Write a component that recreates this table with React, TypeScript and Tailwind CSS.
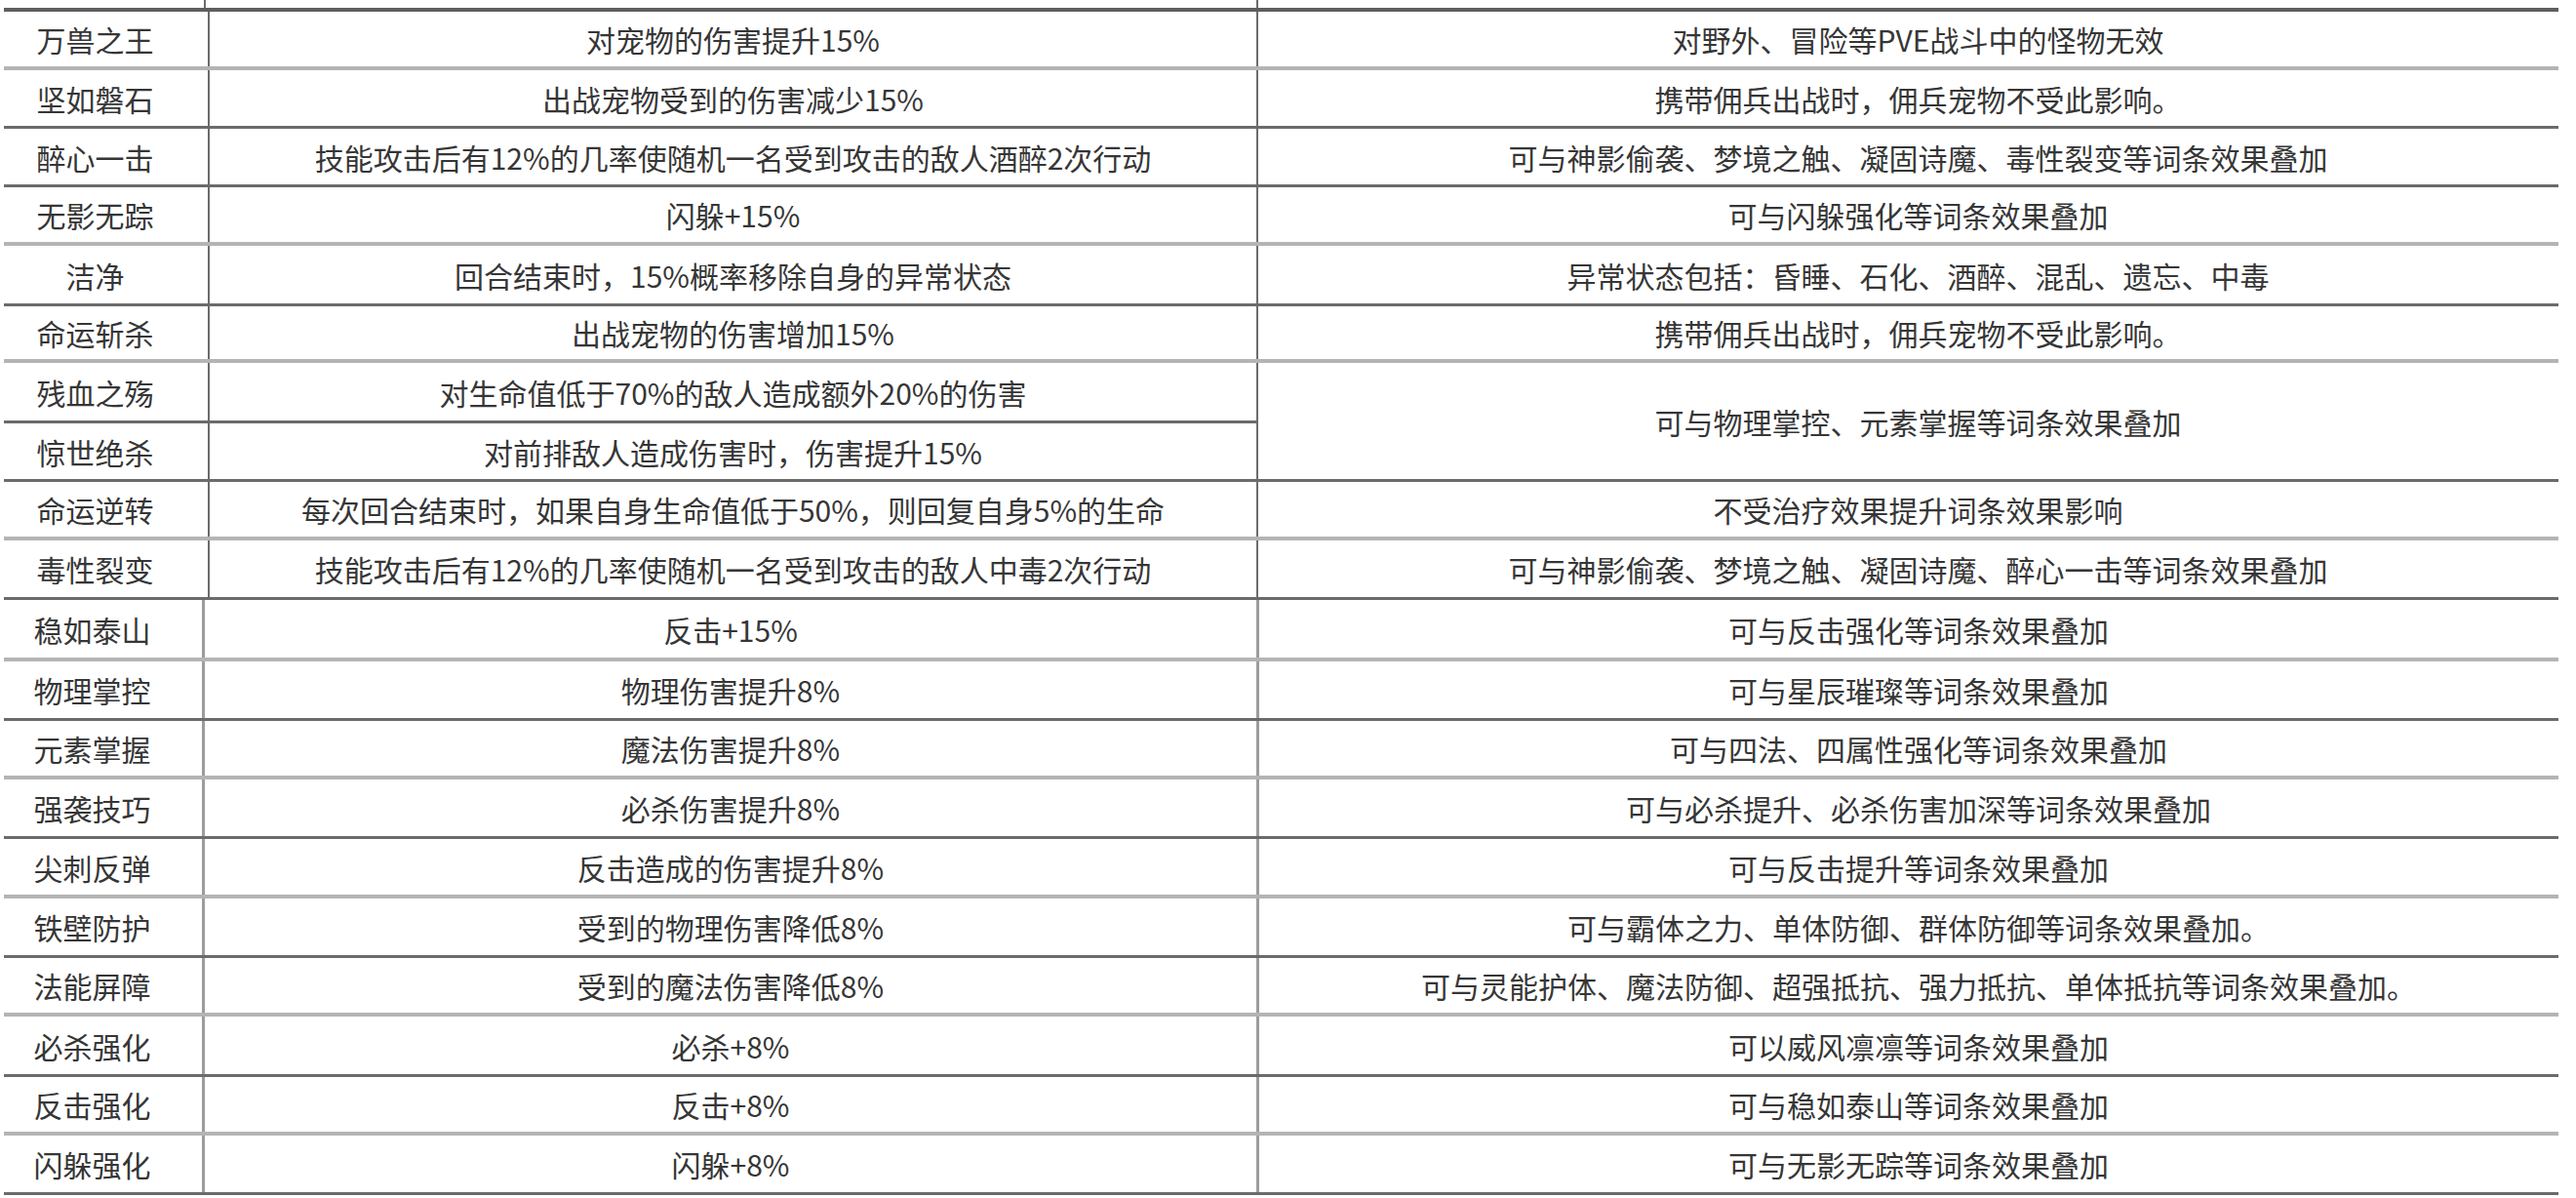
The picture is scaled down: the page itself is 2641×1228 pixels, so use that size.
type Line = 'dark' | 'light';

interface Row {
  name: string;
  effect: string;
  note: string;
  h: string;
  line: Line;
}

const LINE: Record<Line, string> = {
  dark: 'border-b-[3px] border-[#6b6b6b]',
  light: 'border-b-4 border-[#b4b4b4]',
};

const TOP_ROWS: Row[] = [
  { name: '万兽之王', effect: '对宠物的伤害提升15%', note: '对野外、冒险等PVE战斗中的怪物无效', h: 'h-[60px]', line: 'light' },
  { name: '坚如磐石', effect: '出战宠物受到的伤害减少15%', note: '携带佣兵出战时，佣兵宠物不受此影响。', h: 'h-[60px]', line: 'dark' },
  { name: '醉心一击', effect: '技能攻击后有12%的几率使随机一名受到攻击的敌人酒醉2次行动', note: '可与神影偷袭、梦境之触、凝固诗魔、毒性裂变等词条效果叠加', h: 'h-[60px]', line: 'dark' },
  { name: '无影无踪', effect: '闪躲+15%', note: '可与闪躲强化等词条效果叠加', h: 'h-[60px]', line: 'light' },
  { name: '洁净', effect: '回合结束时，15%概率移除自身的异常状态', note: '异常状态包括：昏睡、石化、酒醉、混乱、遗忘、中毒', h: 'h-[62px]', line: 'dark' },
  { name: '命运斩杀', effect: '出战宠物的伤害增加15%', note: '携带佣兵出战时，佣兵宠物不受此影响。', h: 'h-[58px]', line: 'light' },
];

const MERGED: Row[] = [
  { name: '残血之殇', effect: '对生命值低于70%的敌人造成额外20%的伤害', note: '', h: 'h-[62px]', line: 'dark' },
  { name: '惊世绝杀', effect: '对前排敌人造成伤害时，伤害提升15%', note: '', h: 'h-[60px]', line: 'dark' },
];

const MID_ROWS: Row[] = [
  { name: '命运逆转', effect: '每次回合结束时，如果自身生命值低于50%，则回复自身5%的生命', note: '不受治疗效果提升词条效果影响', h: 'h-[60px]', line: 'light' },
  { name: '毒性裂变', effect: '技能攻击后有12%的几率使随机一名受到攻击的敌人中毒2次行动', note: '可与神影偷袭、梦境之触、凝固诗魔、醉心一击等词条效果叠加', h: 'h-[61px]', line: 'dark' },
];

const LOW_ROWS: Row[] = [
  { name: '稳如泰山', effect: '反击+15%', note: '可与反击强化等词条效果叠加', h: 'h-[63px]', line: 'light' },
  { name: '物理掌控', effect: '物理伤害提升8%', note: '可与星辰璀璨等词条效果叠加', h: 'h-[61px]', line: 'dark' },
  { name: '元素掌握', effect: '魔法伤害提升8%', note: '可与四法、四属性强化等词条效果叠加', h: 'h-[60px]', line: 'light' },
  { name: '强袭技巧', effect: '必杀伤害提升8%', note: '可与必杀提升、必杀伤害加深等词条效果叠加', h: 'h-[61px]', line: 'dark' },
  { name: '尖刺反弹', effect: '反击造成的伤害提升8%', note: '可与反击提升等词条效果叠加', h: 'h-[61px]', line: 'light' },
  { name: '铁壁防护', effect: '受到的物理伤害降低8%', note: '可与霸体之力、单体防御、群体防御等词条效果叠加。', h: 'h-[61px]', line: 'dark' },
  { name: '法能屏障', effect: '受到的魔法伤害降低8%', note: '可与灵能护体、魔法防御、超强抵抗、强力抵抗、单体抵抗等词条效果叠加。', h: 'h-[60px]', line: 'light' },
  { name: '必杀强化', effect: '必杀+8%', note: '可以威风凛凛等词条效果叠加', h: 'h-[62px]', line: 'dark' },
  { name: '反击强化', effect: '反击+8%', note: '可与稳如泰山等词条效果叠加', h: 'h-[60px]', line: 'light' },
  { name: '闪躲强化', effect: '闪躲+8%', note: '可与无影无踪等词条效果叠加', h: 'h-[61px]', line: 'dark' },
];

const cell = 'flex items-center justify-center whitespace-nowrap';

function UpperRow({ row }: { row: Row }) {
  return (
    <div className={`flex ${row.h} ${LINE[row.line]}`}>
      <div className={`${cell} w-[209px] pr-[22px]`}>{row.name}</div>
      <div className={`${cell} w-[1075px] border-l-2 border-[#6b6b6b]`}>{row.effect}</div>
      <div className={`${cell} flex-1 border-l-2 border-[#6b6b6b] pl-[20px]`}>{row.note}</div>
    </div>
  );
}

function LowerRow({ row }: { row: Row }) {
  return (
    <div className={`flex ${row.h} ${LINE[row.line]}`}>
      <div className={`${cell} w-[203px] pr-[22px]`}>{row.name}</div>
      <div className={`${cell} w-[1081px] border-l-[3px] border-[#9c9c9c]`}>{row.effect}</div>
      <div className={`${cell} flex-1 border-l-[3px] border-[#9c9c9c] pl-[20px]`}>{row.note}</div>
    </div>
  );
}

export default function App() {
  return (
    <div className="h-[1228px] w-[2641px] overflow-hidden bg-white font-['Noto_Sans_CJK_SC',sans-serif] text-[30px] leading-none text-[#363636]">
      <div className="w-[2623px] pl-[4px]">
        {/* cut-off header row */}
        <div className="flex h-[8px]">
          <div className="w-[205px]" />
          <div className="w-[1079px] border-l-2 border-[#6b6b6b]" />
          <div className="flex-1 border-l-2 border-[#6b6b6b]" />
        </div>
        <div className="border-t-4 border-[#5e5e5e]">
          {TOP_ROWS.map((r) => (
            <UpperRow key={r.name} row={r} />
          ))}

          <div className="flex">
            <div className="flex w-[1284px] flex-col">
              {MERGED.map((r) => (
                <div key={r.name} className={`flex ${r.h} ${LINE[r.line]}`}>
                  <div className={`${cell} w-[209px] pr-[22px]`}>{r.name}</div>
                  <div className={`${cell} flex-1 border-l-2 border-[#6b6b6b]`}>{r.effect}</div>
                </div>
              ))}
            </div>
            <div className={`${cell} flex-1 border-l-2 border-b-[3px] border-[#6b6b6b] pl-[20px]`}>
              可与物理掌控、元素掌握等词条效果叠加
            </div>
          </div>

          {MID_ROWS.map((r) => (
            <UpperRow key={r.name} row={r} />
          ))}
          {LOW_ROWS.map((r) => (
            <LowerRow key={r.name} row={r} />
          ))}
        </div>
      </div>
    </div>
  );
}
